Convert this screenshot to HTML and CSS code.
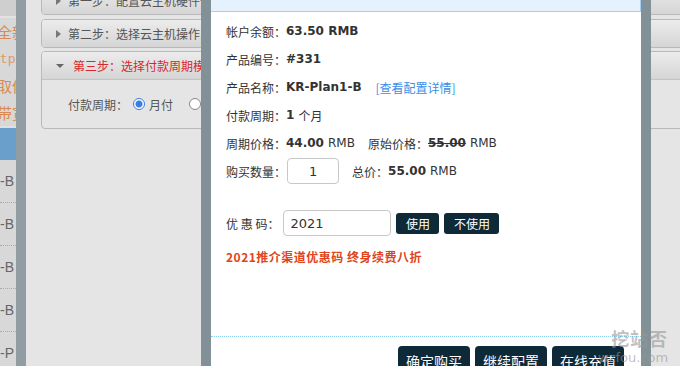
FILE: index.html
```html
<!DOCTYPE html>
<html lang="zh-CN">
<head>
<meta charset="UTF-8">
<title>确认订单</title>
<link rel="stylesheet" href="styles.css">
</head>
<body>

<div class="page">
    <div class="page-top"></div>
    <div class="page-line">全新</div>
    <div class="page-line">ttp://</div>
    <div class="page-line">取供</div>
    <div class="page-line">带宽</div>
    <div class="page-bar"></div>
    <div class="page-row">-B</div>
    <div class="page-row">-B</div>
    <div class="page-row">-B</div>
    <div class="page-row">-B</div>
    <div class="page-row">-P</div>
</div>

<div class="back-win">
    <div class="accordion">
        <div class="acc-item">
            <div class="acc-head"><span class="arrow-r"></span>第一步：配置云主机硬件性能</div>
        </div>
        <div class="acc-item">
            <div class="acc-head"><span class="arrow-r"></span>第二步：选择云主机操作系统</div>
        </div>
        <div class="acc-item open">
            <div class="acc-head active"><span class="arrow-d"></span>第三步：选择付款周期模式</div>
            <div class="acc-body">
                付款周期：
                <span class="radio checked"></span>月付
                <span class="radio second"></span>年付
            </div>
        </div>
    </div>
</div>

<div class="dialog">
    <div class="dialog-title"></div>
    <div class="dialog-body">
        <div class="row">帐户余额：<b>63.50 RMB</b></div>
        <div class="row">产品编号：<b>#331</b></div>
        <div class="row">产品名称：<b>KR-Plan1-B</b><a class="link">[查看配置详情]</a></div>
        <div class="row">付款周期：<b>1</b><span class="unit">个月</span></div>
        <div class="row">周期价格：<b>44.00</b><span class="unit">RMB</span><span class="sep">原始价格：<b><s>55.00</s></b><span class="unit">RMB</span></span></div>
        <div class="row">购买数量：<span class="qty">1</span><span class="sep">总价：<b>55.00</b><span class="unit">RMB</span></span></div>
        <div class="row coupon">优 惠 码：<span class="code">2021</span><span class="btn-sm">使用</span><span class="btn-sm wide">不使用</span></div>
        <div class="row promo">2021推介渠道优惠码 终身续费八折</div>
    </div>
    <div class="dialog-foot">
        <span class="btn">确定购买</span>
        <span class="btn">继续配置</span>
        <span class="btn">在线充值</span>
    </div>
</div>

<div class="watermark">
    <div class="wm-big">挖站否</div>
    <div class="wm-small">wzfou.com</div>
</div>

</body>
</html>
```
FILE: styles.css
```css
body {
    margin: 0;
    width: 680px;
    height: 366px;
    overflow: hidden;
    position: relative;
    background: #e4e4e4;
    font-family: "DejaVu Sans", "Noto Sans CJK SC", sans-serif;
    font-size: 12px;
    color: #333;
}
.page {
    width: 16px;
    height: 366px;
    background: #d8d8d8;
    display: flex;
    flex-direction: column;
    overflow: hidden;
    white-space: nowrap;
}
.page-top {
    height: 16px;
    flex-shrink: 0;
    border-bottom: 2px solid #e2e2e2;
    background: #cfcfcf;
}
.page-line {
    height: 27px;
    flex-shrink: 0;
    line-height: 27px;
    font-size: 15px;
    color: #d98a52;
    font-family: "Noto Sans CJK SC", sans-serif;
    margin-left: -3px;
}
.page-line:nth-child(3) {
    font-family: "DejaVu Sans Mono", monospace;
    font-size: 13px;
    color: #dd9a6a;
    margin-left: -8px;
}
.page-bar {
    flex-shrink: 0;
    height: 32px;
    background: #6a9fcb;
    border-top: 2px solid #e0e0e0;
}
.page-row {
    flex-shrink: 0;
    height: 42px;
    line-height: 42px;
    border-bottom: 1px dotted #aaa;
    font-family: "Liberation Sans", sans-serif;
    font-size: 14px;
    color: #666;
}
.back-win {
    position: absolute;
    left: 16px;
    top: -24px;
    width: 639px;
    height: 400px;
    border: 10px solid rgba(62, 86, 96, 0.5);
    border-right: none;
    background: #e5e5e5;
    padding: 0 0 0 15px;
    overflow: hidden;
}
.accordion {
    display: flex;
    flex-direction: column;
    gap: 3px;
    width: 700px;
}
.acc-item {
    border: 1px solid #b9b9b9;
    border-radius: 4px;
    overflow: hidden;
}
.acc-item:first-child {
    margin-bottom: 1px;
}
.acc-head {
    height: 27px;
    line-height: 27px;
    padding-left: 14px;
    background: linear-gradient(#ececec, #d5d5d5);
    color: #555;
    font-family: "Noto Sans CJK SC", sans-serif;
    font-size: 12px;
    display: flex;
    align-items: center;
    gap: 7px;
    white-space: nowrap;
}
.acc-head.active {
    color: #d9262b;
    border-bottom: 1px solid #c4c4c4;
}
.arrow-r {
    width: 0;
    height: 0;
    border-left: 5px solid #777;
    border-top: 4px solid transparent;
    border-bottom: 4px solid transparent;
}
.arrow-d {
    width: 0;
    height: 0;
    border-top: 4px solid #666;
    border-left: 4px solid transparent;
    border-right: 4px solid transparent;
    margin-right: 2px;
}
.acc-body {
    height: 48px;
    display: flex;
    align-items: center;
    padding-left: 26px;
    color: #555;
    font-family: "Noto Sans CJK SC", sans-serif;
    font-size: 12px;
    white-space: nowrap;
}
.radio {
    width: 10px;
    height: 10px;
    border: 1px solid #888;
    border-radius: 50%;
    background: #fff;
    margin: 0 4px 0 5px;
}
.radio.checked {
    border-color: #3b7de0;
    background: radial-gradient(#3b7de0 3px, #fff 4px);
}
.radio.second {
    margin-left: 16px;
}
.dialog {
    position: absolute;
    left: 201px;
    top: -20px;
    width: 430px;
    height: 420px;
    border: 10px solid rgba(62, 86, 96, 0.65);
    border-top: none;
    background: #fff;
    display: flex;
    flex-direction: column;
}
.dialog-title {
    height: 31px;
    background: #e5f2fd;
    border-bottom: 1px solid #a6cff3;
    border-right: 1px solid #a6cff3;
}
.dialog-body {
    height: 324px;
    box-sizing: border-box;
    padding: 5px 15px 0;
    display: flex;
    flex-direction: column;
}
.row {
    height: 28px;
    flex-shrink: 0;
    display: flex;
    align-items: center;
    white-space: nowrap;
    font-family: "Noto Sans CJK SC", sans-serif;
}
.row b {
    font-family: "DejaVu Sans", sans-serif;
    font-weight: bold;
    color: #333;
}
.row s {
    text-decoration-thickness: 1px;
}
.unit {
    margin-left: 4px;
    font-family: "DejaVu Sans", "Noto Sans CJK SC", sans-serif;
}
.link {
    margin-left: 14px;
    color: #3a8ee6;
}
.sep {
    margin-left: 13px;
    display: flex;
    align-items: center;
}
.qty {
    width: 50px;
    height: 24px;
    border: 1px solid #c8c8c8;
    border-radius: 4px;
    display: flex;
    align-items: center;
    justify-content: center;
    font-family: "DejaVu Sans", sans-serif;
    font-size: 13px;
    margin-left: 1px;
}
.coupon {
    margin-top: 24px;
}
.code {
    width: 100px;
    height: 24px;
    border: 1px solid #c8c8c8;
    border-radius: 4px;
    display: flex;
    align-items: center;
    padding-left: 6px;
    font-family: "DejaVu Sans", sans-serif;
    font-size: 13px;
    margin-left: 4px;
}
.btn-sm {
    width: 43px;
    height: 21px;
    margin-left: 5px;
    border-radius: 3px;
    background: #0e2a39;
    color: #fff;
    display: flex;
    align-items: center;
    justify-content: center;
    font-size: 12px;
}
.btn-sm.wide {
    width: 55px;
}
.promo {
    margin-top: 5px;
    color: #e0441a;
    font-weight: bold;
    letter-spacing: 0.5px;
}
.dialog-foot {
    border-top: 1px dotted #8ccff5;
    padding: 9px 17px 0 0;
    display: flex;
    justify-content: flex-end;
    gap: 5px;
}
.btn {
    width: 72px;
    height: 30px;
    border-radius: 4px;
    background: #0e2a39;
    color: #fff;
    font-family: "Noto Sans CJK SC", sans-serif;
    font-size: 14px;
    display: flex;
    align-items: center;
    justify-content: center;
}
.watermark {
    position: absolute;
    left: 598px;
    top: 329px;
    color: rgba(150, 150, 150, 0.6);
    text-align: right;
    line-height: 1;
}
.wm-big {
    font-family: "Noto Sans CJK SC", sans-serif;
    font-weight: bold;
    font-size: 18px;
    letter-spacing: 1px;
    padding-left: 10px;
}
.wm-small {
    font-family: "DejaVu Sans", sans-serif;
    font-size: 13px;
    margin-top: 4px;
}
```
